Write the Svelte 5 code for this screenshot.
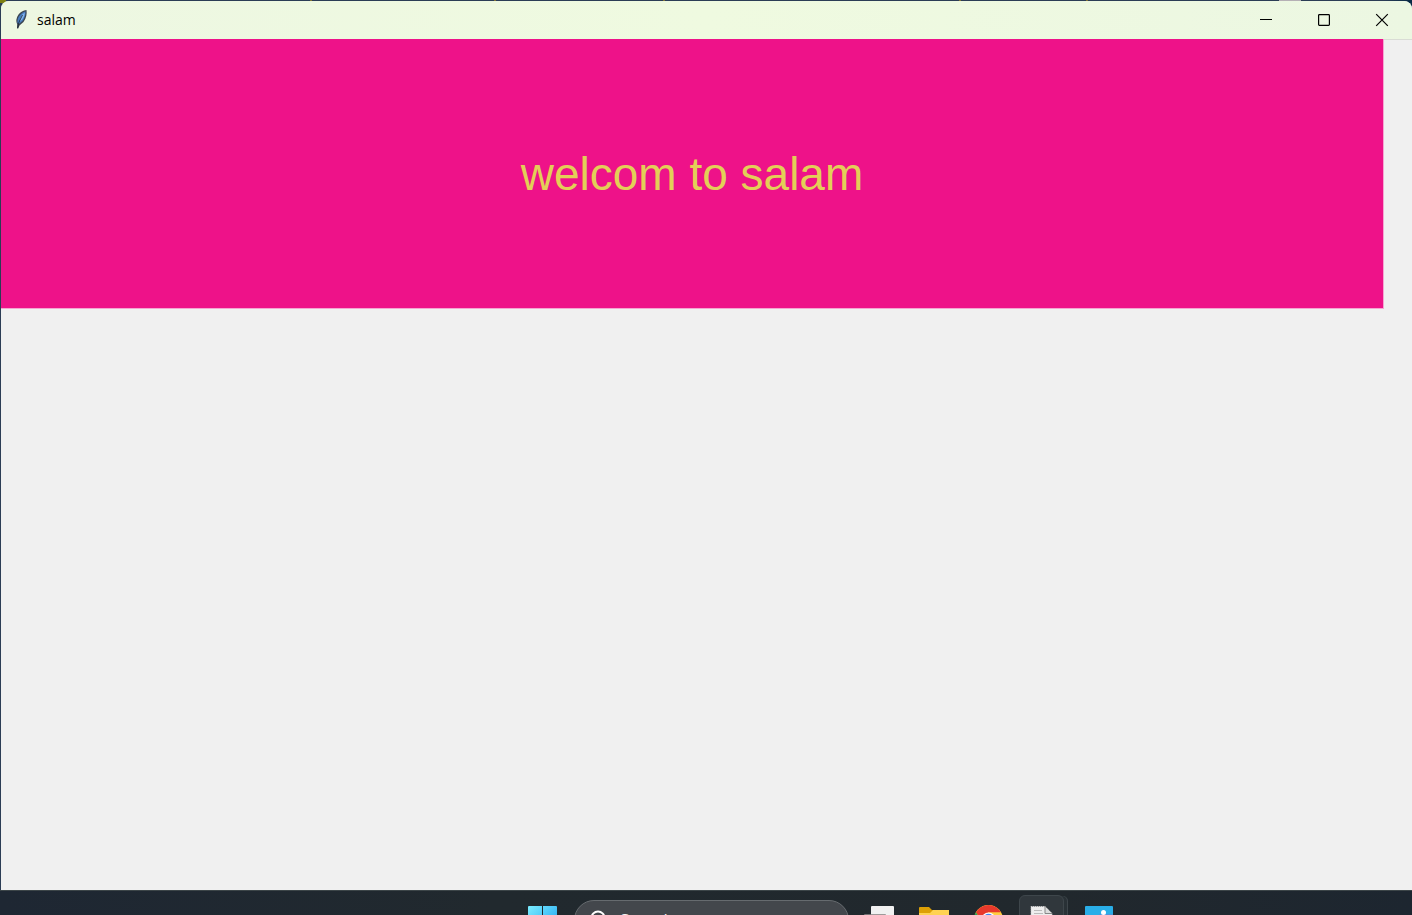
<script lang="ts">
  const title = 'salam';
  const message = 'welcom to salam';

  let query = $state('');
</script>

<div class="desktop">
  <main class="window">
    <header class="titlebar">
      <svg class="feather" viewBox="0 0 14 20" aria-hidden="true">
        <path d="M3 18.500 3.200 14.500Q1 9.500 4.500 4.500 7.500.5 12.500 0 13.500 6.500 9.500 12L5.500 15.500 4.200 18.500Z" fill="#3b4652" />
        <path d="M3.500 13Q3 8.500 6 5 8 2.500 11.500 1.300 11.800 6.500 8.500 11L4.800 14Z" fill="#4679bd" />
        <path d="M6.500 8Q8 4 10.800 2.500 10.800 6.500 8.300 9.500L6 11.500Z" fill="#83b5ee" />
        <path d="M3.600 18 4.800 12.500 8.500 5" fill="none" stroke="#1b2430" stroke-width=".8" />
      </svg>
      <h1 class="title">{title}</h1>
      <div class="controls">
        <button class="control" aria-label="Minimize">
          <svg viewBox="0 0 12 12"><path d="M0 5.500H12" /></svg>
        </button>
        <button class="control" aria-label="Maximize">
          <svg viewBox="0 0 12 12"><rect x=".6" y=".6" width="10.800" height="10.800" rx=".8" /></svg>
        </button>
        <button class="control" aria-label="Close">
          <svg viewBox="0 0 12 12"><path d="m.2.2 11.600 11.600M11.800.2.2 11.800" /></svg>
        </button>
      </div>
    </header>
    <section class="content">
      <p class="banner">{message}</p>
    </section>
  </main>

  <footer class="taskbar">
    <button class="task" aria-label="Start">
      <svg width="29" height="29" viewBox="0 0 29 29">
        <defs>
          <linearGradient id="start" x2="1" y2="1">
            <stop stop-color="#7bedff" />
            <stop offset="1" stop-color="#159cf0" />
          </linearGradient>
        </defs>
        <path d="M0 1q0-1 1-1h13v14H0zM15 0h13q1 0 1 1v13H15zM0 15h14v14H0zM15 15h14v14H15z" fill="url(#start)" />
      </svg>
    </button>
    <label class="search">
      <svg width="20" height="20" viewBox="0 0 20 20" aria-hidden="true">
        <circle cx="9" cy="8" r="6.500" fill="none" stroke="#fff" stroke-width="2" />
        <path d="m14 13 5 5" stroke="#fff" stroke-width="2" />
      </svg>
      <input type="text" placeholder="Search" aria-label="Search" bind:value={query} />
    </label>
    <button class="task" aria-label="Task view">
      <svg width="30" height="29" viewBox="0 0 30 29">
        <rect x="7" width="23" height="22" rx="1" fill="#f1f1f1" />
        <rect y="8" width="22" height="20" rx="1" fill="#8a8585" fill-opacity=".8" />
      </svg>
    </button>
    <button class="task" aria-label="File Explorer">
      <svg width="30" height="29" viewBox="0 0 30 29">
        <path d="M0 2q0-1 1-1h9l3 3h16q1 0 1 1v8H0z" fill="#dda006" />
        <path d="M0 7h11l3-3h16v24H0z" fill="#ffd252" />
      </svg>
    </button>
    <button class="task" aria-label="Google Chrome">
      <svg width="29" height="29" viewBox="0 1 29 29">
        <circle cx="14.500" cy="14.500" r="14.500" fill="#ffcd40" />
        <path d="M2 7.200A14.500 14.500 0 0 1 27 7.200H14.500L8 18z" fill="#e8392c" />
        <path d="M2 7.200 8.200 18 14.500 21 11 28.600A14.500 14.500 0 0 1 2 7.200z" fill="#26a653" />
        <circle cx="14.500" cy="14.500" r="7" fill="#fff" />
        <circle cx="14.500" cy="14.500" r="5.700" fill="#4086f4" />
      </svg>
    </button>
    <button class="task grouped" aria-label="Python IDLE">
      <svg width="24" height="29" viewBox="0 0 24 29">
        <path d="M1 .5h14l7 7V28H1z" fill="#eee" stroke="#ccc" stroke-dasharray="1 1" />
        <path d="M15 .5v7h7" fill="#ddd" stroke="#888" />
        <path d="M4 4.500h8M4 7.500h9M4 10.500h15M4 13.500h15M4 16.500h12" stroke="#bbb" />
      </svg>
    </button>
    <button class="task" aria-label="Photos">
      <svg width="28" height="29" viewBox="0 0 28 29">
        <rect width="28" height="28" rx="1" fill="#29aee8" />
        <path d="M14 8h14v20H14z" fill="#4d94dc" />
        <circle cx="18.500" cy="6.500" r="2.500" fill="#fff" />
        <path d="m0 28 14-15 14 15z" fill="#d8f2ff" />
      </svg>
    </button>
  </footer>
</div>

<style>
  :global(body) {
    margin: 0;
  }

  /* slivers of the editor behind the window show along the top edge */
  .desktop {
    box-sizing: border-box;
    display: flex;
    flex-direction: column;
    height: 100vh;
    padding: 1px 0 0 1px;
    overflow: hidden;
    background:
      linear-gradient(#7f7235, #7f7235) 22% 0 / 2px 1px no-repeat,
      linear-gradient(#7f7235, #7f7235) 35% 0 / 2px 1px no-repeat,
      linear-gradient(#7f7235, #7f7235) 47% 0 / 2px 1px no-repeat,
      linear-gradient(#7f7235, #7f7235) 68% 0 / 2px 1px no-repeat,
      linear-gradient(#7f7235, #7f7235) 77% 0 / 2px 1px no-repeat,
      linear-gradient(#b5b0b5, #b5b0b5) 92% 0 / 22px 1px no-repeat,
      linear-gradient(#7c7f13, #7c7f13) 0 0 / 6px 3px no-repeat,
      linear-gradient(90deg, #2b3d55 98%, #062a45);
    font-family: 'Open Sans', 'Noto Sans', sans-serif;
  }

  .window {
    display: flex;
    flex: 1;
    flex-direction: column;
    overflow: hidden;
    border-radius: 8px 8px 0 0;
    background: #f0f0f0;
  }

  .titlebar {
    display: flex;
    align-items: center;
    height: 38px;
    padding-left: 13px;
    background: linear-gradient(90deg, #edf7e2, #effae0 50%, #ecf7e2);
  }

  .feather {
    width: 14px;
    height: 20px;
  }

  .title {
    flex: 1;
    margin: 0 0 0 9px;
    color: #000;
    font-size: 14px;
    font-weight: 400;
    line-height: 20px;
  }

  .controls {
    display: flex;
    height: 100%;
    padding-right: 1px;
  }

  .control {
    display: grid;
    place-items: center;
    width: 58px;
    padding: 0;
    border: 0;
    background: none;
  }

  .control svg {
    width: 12px;
    height: 12px;
    overflow: visible;
    fill: none;
    stroke: #000;
    stroke-width: 1.2;
  }

  .content {
    flex: 1;
    padding-right: 28px;
    box-shadow: inset 0 1px #d9dcd5;
  }

  .banner {
    margin: 0;
    padding: 108px 0 107px;
    border: solid #f5a5d2;
    border-width: 0 1px 1px 0;
    background: #ee1289;
    color: #e3cf57;
    font-family: 'Liberation Sans', Arial, sans-serif;
    font-size: 46px;
    line-height: 54px;
    text-align: center;
  }

  .taskbar {
    box-sizing: border-box;
    display: flex;
    align-items: flex-start;
    justify-content: center;
    height: 25px;
    padding: 4px 0 0 229px;
    margin-left: -1px;
    border-top: 1px solid #3c4548;
    overflow: hidden;
    background: linear-gradient(90deg, #1e2733, #21292e 35%, #21282d 75%, #1d2630);
  }

  .task {
    display: flex;
    flex-shrink: 0;
    align-items: flex-start;
    justify-content: center;
    box-sizing: border-box;
    width: 45px;
    height: 45px;
    margin: 0 5px;
    padding: 10px 0 0;
    border: 1px solid transparent;
    border-radius: 6px;
    background: none;
  }

  .task svg {
    flex-shrink: 0;
    overflow: visible;
  }

  /* second window of the same app peeks out on the right */
  .grouped {
    margin: 0 7px 0 3px;
    border-color: #3e464b;
    background: #30373c;
    box-shadow: 4px 0 0 -1px #293136, 5px 0 0 -1px #3e464b;
  }

  .search {
    display: flex;
    flex-shrink: 0;
    align-items: center;
    box-sizing: border-box;
    width: 275px;
    height: 40px;
    margin: 5px 2px 0 4px;
    padding: 0 14px;
    border: 1px solid #666b6f;
    border-radius: 20px;
    background: #43474c;
  }

  .search svg {
    flex-shrink: 0;
  }

  .search input {
    width: 100%;
    margin-left: 11px;
    padding: 0;
    border: 0;
    outline: 0;
    background: none;
    color: #fff;
    font: inherit;
    font-size: 17px;
    line-height: 24px;
  }

  .search input::placeholder {
    color: #eee;
    opacity: 1;
  }
</style>
